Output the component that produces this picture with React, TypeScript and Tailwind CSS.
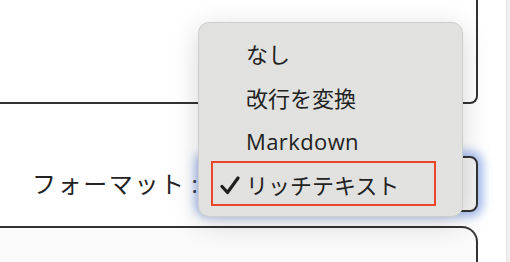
import React from "react";

const font = { fontFamily: '"Open Sans", "Noto Sans CJK JP", sans-serif' };

const options = ["なし", "改行を変換", "Markdown", "リッチテキスト"];

const Check = () => (
  <svg width="20" height="19" viewBox="0 0 20 19" className="absolute left-[21px] top-[13px]">
    <path d="M2 10.5 L7.5 16.5 L18 2" fill="none" stroke="#1f1f1f" strokeWidth="3.2" strokeLinecap="round" strokeLinejoin="round" />
  </svg>
);

export default function App() {
  const selected = 3;

  return (
    <div className="relative flex h-[262px] w-[510px] overflow-hidden bg-white text-[#222]" style={font}>
      <div className="-ml-[20px] flex w-[526px] flex-col pr-[28px]">
        {/* panel above */}
        <div className="h-[104px] shrink-0 rounded-br-[8px] border-r-2 border-b-2 border-[#333]" />

        {/* format row */}
        <div className="mt-[52px] flex h-[56px] shrink-0 items-center pl-[52px]">
          <span className="text-[24px] leading-none tracking-[1.6px]">フォーマット</span>
          <span className="ml-[6px] text-[24px] leading-none">:</span>
          <div className="ml-[2px] h-full flex-1 rounded-[8px] border-2 border-[#333] bg-[#f3f3f3] shadow-[0_0_10px_5px_rgba(80,125,225,0.5)]" />
        </div>

        {/* panel below */}
        <div className="mt-[14px] h-[60px] shrink-0 rounded-tr-[16px] border-t-2 border-r-2 border-[#333] bg-[#fafafa]" />
      </div>

      <div className="w-[4px] shrink-0 border-l border-[#e4e4e4] bg-[#efefef]" />

      {/* dropdown menu */}
      <div className="absolute left-[198px] top-[22px] flex h-[195px] w-[265px] flex-col rounded-[11px] border border-[#cdcdcd] bg-[#e1e1df] py-[9px] shadow-[0_6px_28px_rgba(0,0,0,0.16)]">
        {options.map((o, i) => (
          <div key={o} className="relative flex h-[44px] items-center pl-[47px] text-[22px] leading-none">
            {i === selected && (
              <>
                <div className="absolute left-[12px] top-[-2px] h-[45px] w-[225px] border-2 border-[#e9472b]" />
                <Check />
              </>
            )}
            <span className={o === "Markdown" ? "tracking-[0.4px]" : ""}>{o}</span>
          </div>
        ))}
      </div>
    </div>
  );
}
